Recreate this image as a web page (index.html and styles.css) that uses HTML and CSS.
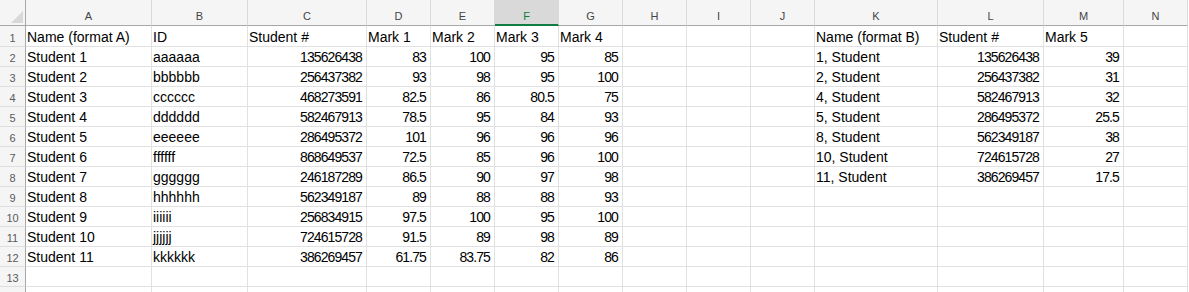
FILE: index.html
```html
<!DOCTYPE html>
<html lang="en">

<head>
  <meta charset="UTF-8">
  <meta name="viewport" content="width=device-width, initial-scale=1.0">
  <title>Sheet1</title>
  <link rel="stylesheet" href="styles.css">
</head>

<body>
  <div class="sheet">
    <div class="row head">
      <div class="corner"><span class="tri"></span></div>
      <div>A</div><div>B</div><div>C</div><div>D</div><div>E</div><div class="sel">F</div><div>G</div>
      <div>H</div><div>I</div><div>J</div><div>K</div><div>L</div><div>M</div><div>N</div>
    </div>
    <div class="row first">
      <div class="rh">1</div>
      <div>Name (format A)</div><div>ID</div><div>Student #</div><div>Mark 1</div><div>Mark 2</div><div>Mark 3</div><div>Mark 4</div>
      <div></div><div></div><div></div>
      <div>Name (format B)</div><div>Student #</div><div>Mark 5</div><div></div>
    </div>
    <div class="row">
      <div class="rh">2</div>
      <div>Student 1</div><div>aaaaaa</div><div class="n">135626438</div><div class="n">83</div><div class="n">100</div><div class="n">95</div><div class="n">85</div>
      <div></div><div></div><div></div>
      <div>1, Student</div><div class="n">135626438</div><div class="n">39</div><div></div>
    </div>
    <div class="row">
      <div class="rh">3</div>
      <div>Student 2</div><div>bbbbbb</div><div class="n">256437382</div><div class="n">93</div><div class="n">98</div><div class="n">95</div><div class="n">100</div>
      <div></div><div></div><div></div>
      <div>2, Student</div><div class="n">256437382</div><div class="n">31</div><div></div>
    </div>
    <div class="row">
      <div class="rh">4</div>
      <div>Student 3</div><div>cccccc</div><div class="n">468273591</div><div class="n">82.5</div><div class="n">86</div><div class="n">80.5</div><div class="n">75</div>
      <div></div><div></div><div></div>
      <div>4, Student</div><div class="n">582467913</div><div class="n">32</div><div></div>
    </div>
    <div class="row">
      <div class="rh">5</div>
      <div>Student 4</div><div>dddddd</div><div class="n">582467913</div><div class="n">78.5</div><div class="n">95</div><div class="n">84</div><div class="n">93</div>
      <div></div><div></div><div></div>
      <div>5, Student</div><div class="n">286495372</div><div class="n">25.5</div><div></div>
    </div>
    <div class="row">
      <div class="rh">6</div>
      <div>Student 5</div><div>eeeeee</div><div class="n">286495372</div><div class="n">101</div><div class="n">96</div><div class="n">96</div><div class="n">96</div>
      <div></div><div></div><div></div>
      <div>8, Student</div><div class="n">562349187</div><div class="n">38</div><div></div>
    </div>
    <div class="row">
      <div class="rh">7</div>
      <div>Student 6</div><div>ffffff</div><div class="n">868649537</div><div class="n">72.5</div><div class="n">85</div><div class="n">96</div><div class="n">100</div>
      <div></div><div></div><div></div>
      <div>10, Student</div><div class="n">724615728</div><div class="n">27</div><div></div>
    </div>
    <div class="row">
      <div class="rh">8</div>
      <div>Student 7</div><div>gggggg</div><div class="n">246187289</div><div class="n">86.5</div><div class="n">90</div><div class="n">97</div><div class="n">98</div>
      <div></div><div></div><div></div>
      <div>11, Student</div><div class="n">386269457</div><div class="n">17.5</div><div></div>
    </div>
    <div class="row">
      <div class="rh">9</div>
      <div>Student 8</div><div>hhhhhh</div><div class="n">562349187</div><div class="n">89</div><div class="n">88</div><div class="n">88</div><div class="n">93</div>
      <div></div><div></div><div></div><div></div><div></div><div></div><div></div>
    </div>
    <div class="row">
      <div class="rh">10</div>
      <div>Student 9</div><div>iiiiii</div><div class="n">256834915</div><div class="n">97.5</div><div class="n">100</div><div class="n">95</div><div class="n">100</div>
      <div></div><div></div><div></div><div></div><div></div><div></div><div></div>
    </div>
    <div class="row">
      <div class="rh">11</div>
      <div>Student 10</div><div>jjjjjj</div><div class="n">724615728</div><div class="n">91.5</div><div class="n">89</div><div class="n">98</div><div class="n">89</div>
      <div></div><div></div><div></div><div></div><div></div><div></div><div></div>
    </div>
    <div class="row">
      <div class="rh">12</div>
      <div>Student 11</div><div>kkkkkk</div><div class="n">386269457</div><div class="n">61.75</div><div class="n">83.75</div><div class="n">82</div><div class="n">86</div>
      <div></div><div></div><div></div><div></div><div></div><div></div><div></div>
    </div>
    <div class="row">
      <div class="rh">13</div>
      <div></div><div></div><div></div><div></div><div></div><div></div><div></div>
      <div></div><div></div><div></div><div></div><div></div><div></div><div></div>
    </div>
    <div class="row">
      <div class="rh"></div>
      <div></div><div></div><div></div><div></div><div></div><div></div><div></div>
      <div></div><div></div><div></div><div></div><div></div><div></div><div></div>
    </div>
  </div>
</body>

</html>
```

FILE: styles.css
```css
body {
  margin: 0;
  background: #fff;
  font-family: "Liberation Sans", Arial, sans-serif;
}

.sheet {
  --cols: 26px 126px 96px 119px repeat(7, 64px) 123px 106px 80px 64px;
}

.row {
  display: grid;
  grid-template-columns: var(--cols);
  height: 20px;
}

.row.first {
  height: 21px;
}

.row > div {
  box-sizing: border-box;
  border-right: 1px solid #e1e1e1;
  border-bottom: 1px solid #e1e1e1;
  padding: 0 2px 0 1px;
  font-size: 14px;
  line-height: 20px;
  color: #000;
  white-space: nowrap;
  overflow: hidden;
}

.row.first > div {
  padding-top: 1px;
}

.row > .n {
  text-align: right;
  letter-spacing: -0.9px;
  padding-right: 4px;
}

.row > .rh {
  background: #f5f5f5;
  border-right-color: #a8a8a8;
  border-bottom-color: #dedede;
  padding: 1px 0 0;
  font-size: 11px;
  color: #5a5a5a;
  text-align: center;
}

.row.first > .rh {
  padding-top: 2px;
}

.row.head {
  height: 26px;
}

.row.head > div {
  background: #f5f5f5;
  border-right-color: #dadada;
  border-bottom-color: #a8a8a8;
  padding: 8px 0 0;
  font-size: 11px;
  line-height: 17px;
  color: #444;
  text-align: center;
}

.row.head > .sel {
  background: #d9d9d9;
  color: #107c41;
  border-bottom: 2px solid #107c41;
}

.row.head > .corner {
  display: flex;
  justify-content: flex-end;
  align-items: flex-end;
  padding: 0 2px 2px 0;
  border-right-color: #a8a8a8;
}

.tri {
  width: 12px;
  height: 12px;
  background: #d9d9d9;
  clip-path: polygon(100% 0, 100% 100%, 0 100%);
}
```
